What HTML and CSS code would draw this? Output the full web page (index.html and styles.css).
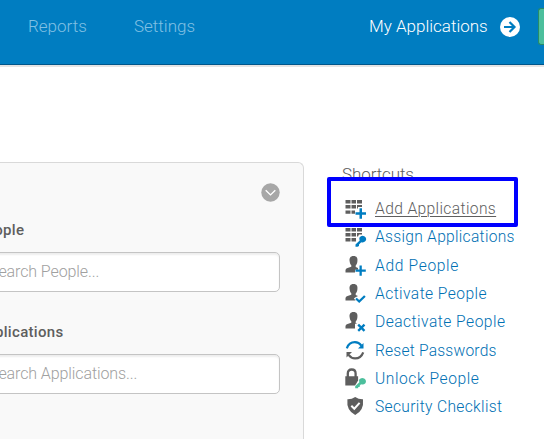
FILE: index.html
```html
<!DOCTYPE html>
<html lang="en">
<head>
<meta charset="utf-8">
<title>Dashboard</title>
<link rel="stylesheet" href="styles.css">
</head>
<body>
<header class="topbar">
  <nav class="nav"><a class="reports">Reports</a><a class="settings">Settings</a></nav>
  <a class="my-apps">My Applications</a>
  <svg class="go" width="20" height="20" viewBox="0 0 20 20"><circle cx="10" cy="10" r="10" fill="#fff"/><path d="M4 10h10M9.5 5l5 5-5 5" fill="none" stroke="#007dc1" stroke-width="2.2"/></svg>
  <span class="green-btn"></span>
</header>
<main class="main">
  <section class="panel">
    <svg class="toggle" width="19" height="19" viewBox="0 0 19 19"><circle cx="9.5" cy="9.5" r="9.2" fill="#a7a7a7"/><path d="M4.7 7.3l4.8 4.6 4.8-4.6" fill="none" stroke="#fff" stroke-width="1.4"/></svg>
    <label class="people-label">People</label>
    <div class="field"><span>Search People...</span></div>
    <label class="apps-label">Applications</label>
    <div class="field"><span>Search Applications...</span></div>
  </section>
  <aside class="shortcuts">
    <h2>Shortcuts</h2>
    <ul>
      <li class="current"><svg viewBox="0 0 22 22"><path class="g" d="M.5 2h5v3.400h-5zM6.500 2h4.500v3.400H6.500zM12 2h5v3.400h-5zM.5 7h5v3.400h-5zM6.500 7h4.500v3.400H6.500zM12 7h5v2h-4v1.400h-1zM.5 12.500h5v3.300h-5zM6.500 12.500h3.500v3.300H6.500z"/><path class="b" d="M14.500 10.200h2.500v4h4v2.500h-4v4h-2.500v-4h-4v-2.500h4z"/></svg><a class="t1">Add Applications</a></li>
      <li><svg viewBox="0 0 22 22"><path class="g" d="M.5 2h5v3.400h-5zM6.500 2h4.500v3.400H6.500zM12 2h5v3.400h-5zM.5 7h5v3.400h-5zM6.500 7h4.500v3.400H6.500zM12 7h5v1.500h-3l-1 1.900h-1zM.5 12h5v3.400h-5zM6.500 12h4.500v3.400H6.500z"/><path class="b" d="M14.500 11.500q2-2.700 4.800-1.200 3 2 1.200 4.700-1.800 2-4.300 1.200L14 18.500V20l-1.500.8h-2v-2.200l4.200-4.200q-.6-1.400-.2-2.900z"/></svg><a class="t2">Assign Applications</a></li>
      <li><svg viewBox="0 0 22 22"><path class="g" d="M8.500 1c3.400 0 4.300 2.100 3.900 5.200-.2 2-.8 3.300-1.700 4.300V12l2.300 1v1.800H10v2.700H.5V15q.2-1.500 2-2l3.800-1.300v-1.400C5.200 9.200 4.800 7.800 4.600 6 4.200 3.200 5.300 1 8.500 1z"/><path class="b" d="M14.500 10.500h2.300v4h4v2.300h-4v4h-2.300v-4h-4v-2.300h4z"/></svg><a class="t3">Add People</a></li>
      <li><svg viewBox="0 0 22 22"><path class="g" d="M8.500 1c3.400 0 4.300 2.100 3.900 5.200-.2 2-.8 3.300-1.700 4.300V12l2.300 1-2.900 1.500-1.200 1 1.700 2H.5V15q.2-1.500 2-2l3.800-1.300v-1.400C5.200 9.200 4.800 7.800 4.600 6 4.200 3.200 5.300 1 8.500 1z"/><path class="bs" d="M11 15.500l3.200 3 5.700-5.500"/></svg><a class="t4">Activate People</a></li>
      <li><svg viewBox="0 0 22 22"><path class="g" d="M8.500 1c3.400 0 4.300 2.100 3.900 5.200-.2 2-.8 3.300-1.700 4.300V12l1.500.8H10v4.700H.5V15q.2-1.500 2-2l3.800-1.300v-1.400C5.200 9.200 4.800 7.800 4.600 6 4.200 3.200 5.300 1 8.500 1z"/><path class="bs" d="M13.200 13.600l6.300 6.300M19.500 13.600l-6.300 6.300"/></svg><a class="t5">Deactivate People</a></li>
      <li><svg viewBox="0 0 22 22"><path d="M1.800 8.300Q4 2.200 9.900 2.200q4 0 6.500 3.500" fill="none" stroke="#007dc1" stroke-width="2.2"/><path class="b" d="M18.500 3v5.500H13z"/><path d="M18.200 12.300q-2.200 6.100-8.100 6.100-4 0-6.500-3.500" fill="none" stroke="#5e5e5e" stroke-width="2.2"/><path class="g" d="M1.500 17.600v-5.500H7z"/></svg><a class="t6">Reset Passwords</a></li>
      <li><svg viewBox="0 0 22 22"><path d="M2.800 9V5.500q0-4 3.900-4t3.900 4V9" fill="none" stroke="#5e5e5e" stroke-width="2.3"/><path class="g" d="M.3 8.200h12.800v4.300l-3 5.100H.3z"/><path d="M14.200 11.500q2.200-2.500 5-1 2.800 2 1.200 4.700-2 2-4.400 1l-1.300 1.500v1.400h-1.500v1.200h-3v-2.100l4.100-4q-.4-1.300-.1-2.700z" fill="#4cbf9c"/></svg><a class="t7">Unlock People</a></li>
      <li><svg viewBox="0 0 22 22"><path class="g" d="M10.200 1q3.500 2.500 7.800 2.300 1.200 11.500-7.800 15.600Q1.200 14.800 2.400 3.300 6.700 3.500 10.200 1z"/><path d="M6.300 9.700l3 3 5.300-5.800" fill="none" stroke="#fff" stroke-width="2"/></svg><a class="t8">Security Checklist</a></li>
    </ul>
    <div class="highlight"></div>
  </aside>
</main>
</body>
</html>
```
FILE: styles.css
```css
* { box-sizing: border-box; }
body { margin: 0; width: 544px; height: 439px; overflow: hidden; background: #fff; font-family: Roboto, "Liberation Sans", sans-serif; font-size: 15px; color: #5e5e5e; }
.topbar { display: flex; align-items: flex-start; height: 65px; padding: 16px 0 0 28px; background: #007dc1; border-bottom: 1px solid #00568a; box-shadow: 0 2px 0 #e4e4e4; font-size: 17px; font-weight: 350; line-height: 21px; color: #fff; white-space: nowrap; }
.nav { display: flex; color: #80c0e3; flex: 0 0 341px; }
.reports { width: 106px; }
.my-apps { flex: 0 0 131px; }
.go { flex: none; margin-top: 1px; }
.green-btn { flex: none; width: 6px; height: 37px; margin: -8px 0 0 18px; background: #4cbf9c; border: 1px solid #278b68; border-right: 0; border-radius: 3px 0 0 3px; }
.main { display: flex; align-items: flex-start; padding-top: 97px; }
.panel { display: flex; flex-direction: column; flex: none; width: 353px; height: 277px; margin-left: -49px; padding: 20px 24px 0; border: 1px solid #d9d9d9; border-bottom: 0; border-radius: 6px 6px 0 0; background: #f9f9f9; }
.toggle { align-self: flex-end; flex: none; margin-right: -1px; }
.panel label { height: 20px; line-height: 20px; font-weight: 500; margin-top: 18px; letter-spacing: .33px; }
.field { flex: none; height: 40px; margin: 12px -1px 0; padding-left: 13px; background: #fff; border: 1px solid #c4c4c4; border-radius: 5px; box-shadow: inset 0 2px 2px #eee; font-size: 16px; line-height: 37px; color: #a0a0a0; font-weight: 350; letter-spacing: -.1px; white-space: nowrap; }
.panel .apps-label { margin-top: 30px; }
.shortcuts { position: relative; margin-left: 38px; width: 190px; }
h2 { margin: 2px 0 11px; height: 20px; line-height: 20px; font-size: 17px; font-weight: 350; letter-spacing: -.1px; }
ul { margin: 0; padding: 0 0 0 3px; list-style: none; }
li { display: flex; align-items: center; height: 28.3px; gap: 8px; color: #0070b3; white-space: nowrap; }
li svg { flex: none; width: 22px; height: 22px; }
li a { line-height: 20px; font-size: 15.6px; font-weight: 350; }
.t1 { letter-spacing: .38px; }
.t2 { letter-spacing: .29px; }
.t3 { letter-spacing: .66px; }
.t4 { letter-spacing: .43px; }
.t5 { letter-spacing: .48px; }
.t6 { letter-spacing: .2px; }
.t7 { letter-spacing: .56px; }
.t8 { letter-spacing: .34px; }
.current { color: #5e5e5e; }
.current a { text-decoration: underline; text-underline-offset: 2px; text-decoration-thickness: 1px; }
.g { fill: #5e5e5e; }
.b { fill: #007dc1; }
.bs { fill: none; stroke: #007dc1; stroke-width: 2.3; }
.highlight { position: absolute; left: -15px; top: 15px; width: 191px; height: 50px; border: 4px solid #00f; border-radius: 2px; }
```
